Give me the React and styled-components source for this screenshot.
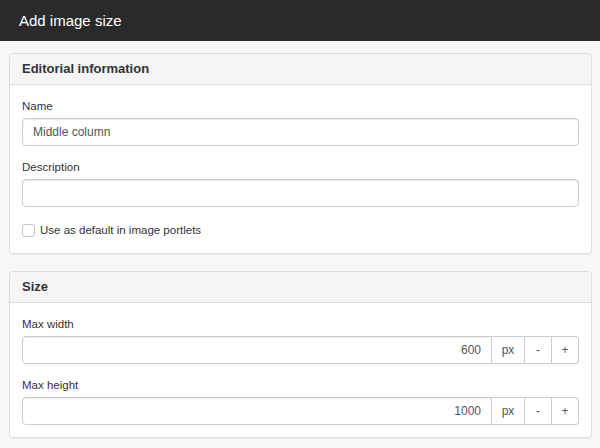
import styled, { createGlobalStyle } from 'styled-components';

const GlobalStyle = createGlobalStyle`
  body {
    margin: 0;
    background: #f7f7f7;
    font-family: "Liberation Sans", Arial, sans-serif;
    color: #333;
  }
  * {
    box-sizing: border-box;
  }
`;

const Page = styled.div`
  min-height: 448px;
  background: #f7f7f7;
`;

const TopBar = styled.header`
  height: 41px;
  background: #2a2a2a;
  color: #fff;
  display: flex;
  align-items: center;
  padding-left: 19px;
  font-size: 15px;
`;

const Content = styled.main`
  padding: 12px 8px 12px 9px;
  display: flex;
  flex-direction: column;
  gap: 17px;
`;

const Panel = styled.section`
  background: #fff;
  border: 1px solid #ddd;
  border-radius: 4px;
  box-shadow: 0 1px 1px rgba(0, 0, 0, 0.05);
`;

const PanelHeading = styled.h3`
  margin: 0;
  padding: 6px 12px;
  line-height: 18px;
  font-size: 13px;
  font-weight: bold;
  color: #333;
  background: #f5f5f5;
  border-bottom: 1px solid #ddd;
  border-radius: 3px 3px 0 0;
`;

const PanelBody = styled.div`
  padding: 12px;
`;

const Field = styled.div`
  margin-bottom: ${(p) => (p.$last ? '0' : '12px')};
`;

const Label = styled.label`
  display: block;
  font-size: 11.5px;
  line-height: 18px;
  margin-bottom: 3px;
  color: #333;
`;

const TextInput = styled.input`
  display: block;
  width: 100%;
  height: 28px;
  padding: 0 10px;
  font-family: inherit;
  font-size: 12px;
  color: #555;
  background: #fff;
  border: 1px solid #ccc;
  border-radius: ${(p) => (p.$grouped ? '4px 0 0 4px' : '4px')};
  box-shadow: inset 0 1px 1px rgba(0, 0, 0, 0.075);
  text-align: ${(p) => (p.$right ? 'right' : 'left')};
  outline: none;
`;

const Group = styled.div`
  display: flex;
  height: 28px;
`;

const Addon = styled.span`
  width: ${(p) => p.$w}px;
  flex: none;
  display: flex;
  align-items: center;
  justify-content: center;
  font-size: 12px;
  color: #555;
  background: #fff;
  border: 1px solid #ccc;
  border-left: none;
  border-radius: ${(p) => (p.$end ? '0 4px 4px 0' : '0')};
  cursor: ${(p) => (p.$button ? 'pointer' : 'default')};
`;

const CheckRow = styled.label`
  display: flex;
  align-items: center;
  gap: 5px;
  height: 22px;
  font-size: 11.5px;
  color: #333;
`;

const Box = styled.span`
  width: 13px;
  height: 13px;
  border: 1px solid #c4c4c4;
  border-radius: 3px;
  background: #fff;
  flex: none;
`;

const NumberField = ({ label, value, last }) => (
  <Field $last={last}>
    <Label>{label}</Label>
    <Group>
      <TextInput $grouped $right defaultValue={value} />
      <Addon $w={33}>px</Addon>
      <Addon $w={27} $button>-</Addon>
      <Addon $w={27} $button $end>+</Addon>
    </Group>
  </Field>
);

const App = () => (
  <Page>
    <GlobalStyle />
    <TopBar>Add image size</TopBar>
    <Content>
      <Panel>
        <PanelHeading>Editorial information</PanelHeading>
        <PanelBody>
          <Field>
            <Label>Name</Label>
            <TextInput defaultValue="Middle column" />
          </Field>
          <Field>
            <Label>Description</Label>
            <TextInput defaultValue="" />
          </Field>
          <CheckRow>
            <Box />
            Use as default in image portlets
          </CheckRow>
        </PanelBody>
      </Panel>
      <Panel>
        <PanelHeading>Size</PanelHeading>
        <PanelBody>
          <NumberField label="Max width" value="600" />
          <NumberField label="Max height" value="1000" last />
        </PanelBody>
      </Panel>
    </Content>
  </Page>
);

export default App;
